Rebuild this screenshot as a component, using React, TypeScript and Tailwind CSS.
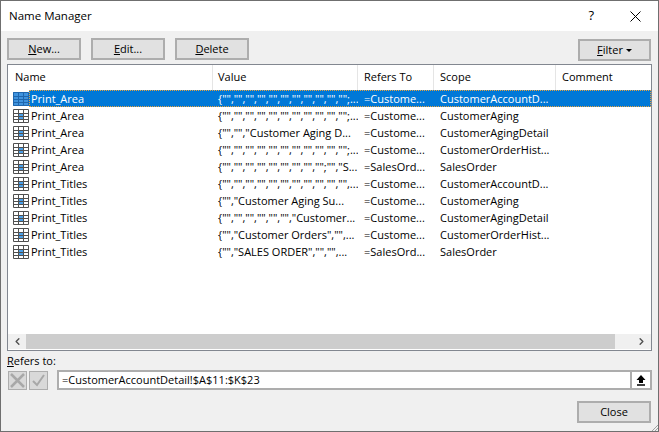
import { ChevronLeft, ChevronRight } from 'lucide-react';

const rows = [
  { name: 'Print_Area', value: '{"","","","","","","","","","","";...', refers: '=Custome...', scope: 'CustomerAccountD...' },
  { name: 'Print_Area', value: '{"","","","","","","","","","","";...', refers: '=Custome...', scope: 'CustomerAging' },
  { name: 'Print_Area', value: '{"","","Customer Aging D...', refers: '=Custome...', scope: 'CustomerAgingDetail' },
  { name: 'Print_Area', value: '{"","","","","","","","","","","";...', refers: '=Custome...', scope: 'CustomerOrderHist...' },
  { name: 'Print_Area', value: '{"","","","","","","","","";"","S...', refers: '=SalesOrd...', scope: 'SalesOrder' },
  { name: 'Print_Titles', value: '{"","","","","","","","","","","",...', refers: '=Custome...', scope: 'CustomerAccountD...' },
  { name: 'Print_Titles', value: '{"","Customer Aging Su...', refers: '=Custome...', scope: 'CustomerAging' },
  { name: 'Print_Titles', value: '{"","","","","","","Customer...', refers: '=Custome...', scope: 'CustomerAgingDetail' },
  { name: 'Print_Titles', value: '{"","Customer Orders","",...', refers: '=Custome...', scope: 'CustomerOrderHist...' },
  { name: 'Print_Titles', value: '{"","SALES ORDER","","",...', refers: '=SalesOrd...', scope: 'SalesOrder' },
];

function GridIcon({ selected }: { selected: boolean }) {
  const line = selected ? '#1f66ad' : '#505050';
  return (
    <svg width="16" height="14" viewBox="0 0 16 14" className="shrink-0">
      <rect x="5" y="4" width="6" height="6" fill="#4a9fe8" />
      {selected && <rect x="0" y="0" width="16" height="14" fill="#3f93de" />}
      <path d="M.5.5h15v13H.5zM.5 4.5h15M.5 7.5h15M.5 10.5h15M5.5.5v13M10.5.5v13" fill="none" stroke={line} />
    </svg>
  );
}

function DialogButton({ children, narrow }: { children: React.ReactNode; narrow?: boolean }) {
  return (
    <button className={`${narrow ? 'w-[73px]' : 'w-[74px]'} h-[22px] border-2 border-[#adadad] bg-[#e1e1e1] text-black flex items-center justify-center`}>
      {children}
    </button>
  );
}

export default function App() {
  return (
    <div className="relative w-[659px] h-[432px] overflow-hidden bg-[#f0f0f0] border border-[#6f6f6f] flex flex-col text-[11px] text-black" style={{ fontFamily: '"Open Sans", "Noto Sans", sans-serif' }}>
      {/* Title bar */}
      <div className="h-[30px] shrink-0 bg-white flex items-center pl-[8px] pr-[17px]">
        <span className="text-[11.5px]">Name Manager</span>
        <span className="ml-auto mr-[36px] text-[13px]">?</span>
        <svg width="11" height="11" viewBox="0 0 11 11"><path d="M.5.5l10 10M10.5.5l-10 10" stroke="#000" fill="none" /></svg>
      </div>

      <div className="flex-1 flex flex-col px-[6px]">
        {/* Toolbar */}
        <div className="flex items-start h-[33px] pt-[7px] gap-[10px]">
          <DialogButton><u>N</u>ew...</DialogButton>
          <DialogButton><u>E</u>dit...</DialogButton>
          <DialogButton><u>D</u>elete</DialogButton>
          <div className="ml-auto mr-[1px] mt-[1px]">
            <DialogButton narrow>
              <u>F</u>ilter
              <span className="ml-[3px] mt-[1px] border-x-[3px] border-t-[3px] border-x-transparent border-t-black" />
            </DialogButton>
          </div>
        </div>

        {/* List */}
        <div className="h-[287px] border border-[#828790] bg-white flex flex-col">
          <div className="h-[25px] shrink-0 grid grid-cols-[205px_145px_76px_122px_1fr] items-center">
            <div className="pl-[7px] h-full flex items-center border-r border-[#e5e5e5]">Name</div>
            <div className="pl-[5px] h-full flex items-center border-r border-[#e5e5e5]">Value</div>
            <div className="pl-[6px] h-full flex items-center border-r border-[#e5e5e5]">Refers To</div>
            <div className="pl-[6px] h-full flex items-center border-r border-[#e5e5e5]">Scope</div>
            <div className="pl-[6px] h-full flex items-center">Comment</div>
          </div>

          <div className="flex-1 flex flex-col">
            {rows.map((row, i) => {
              const selected = i === 0;
              return (
                <div key={i} className="h-[17px] shrink-0 flex items-center pl-[5px]">
                  <GridIcon selected={selected} />
                  <div className={`flex-1 h-full grid grid-cols-[184px_145px_76px_122px_1fr] items-center pt-[1px] ${selected ? 'bg-[#0078d7] text-white outline-1 -outline-offset-1 outline-dotted outline-[#e8a33d]' : ''}`}>
                    <div className="pl-[2px] whitespace-nowrap">{row.name}</div>
                    <div className="pl-[5px] whitespace-nowrap overflow-hidden">{row.value}</div>
                    <div className="pl-[6px] whitespace-nowrap overflow-hidden">{row.refers}</div>
                    <div className="pl-[6px] whitespace-nowrap overflow-hidden">{row.scope}</div>
                    <div />
                  </div>
                </div>
              );
            })}
          </div>

          {/* Horizontal scrollbar */}
          <div className="h-[15px] mb-[1px] shrink-0 flex bg-[#f0f0f0]">
            <div className="w-[18px] flex items-center justify-center text-[#505050]"><ChevronLeft size={11} strokeWidth={3} /></div>
            <div className="flex-1 bg-[#cdcdcd]" />
            <div className="w-[36px] flex items-center justify-end pr-[4px] text-[#505050]"><ChevronRight size={11} strokeWidth={3} /></div>
          </div>
        </div>

        {/* Refers to */}
        <div className="mt-[2px] h-[16px] flex items-center"><span><u>R</u>efers to:</span></div>
        <div className="mt-[1px] h-[20px] flex items-center">
          <div className="ml-[1px] w-[19px] h-[19px] border border-[#adadad] bg-[#d9d9d9] flex items-center justify-center">
            <svg width="15" height="15" viewBox="0 0 15 15"><path d="M1 1l13 13M14 1L1 14" fill="none" stroke="#a8a8a8" strokeWidth="2.5" /></svg>
          </div>
          <div className="ml-[2px] w-[19px] h-[19px] border border-[#adadad] bg-[#d9d9d9] flex items-center justify-center">
            <svg width="15" height="13" viewBox="0 0 15 13"><path d="M2 7l4 4 7-10" fill="none" stroke="#a8a8a8" strokeWidth="2" /></svg>
          </div>
          <div className="ml-[9px] flex-1 h-[20px] border-2 border-[#adadad] bg-white flex items-center pl-[3px]">
            <span>=CustomerAccountDetail!$A$11:$K$23</span>
            <div className="ml-auto w-[20px] h-full border-l-2 border-[#adadad] bg-white flex items-center justify-center">
              <svg width="10" height="11" viewBox="0 0 10 11"><path d="M5 0L9.5 5H7v3H3V5H.5z" fill="#000" /><path d="M1 10h8" stroke="#000" strokeWidth="1.5" /></svg>
            </div>
          </div>
        </div>

        {/* Footer */}
        <div className="mt-[11px] mr-[1px] flex justify-end">
          <DialogButton>Close</DialogButton>
        </div>
      </div>

      {/* Resize grip */}
      <svg width="7" height="7" viewBox="0 0 7 7" className="absolute right-0 bottom-0">
        <path d="M7 1L1 7M7 4L4 7" stroke="#a0a0a0" fill="none" />
      </svg>
    </div>
  );
}
